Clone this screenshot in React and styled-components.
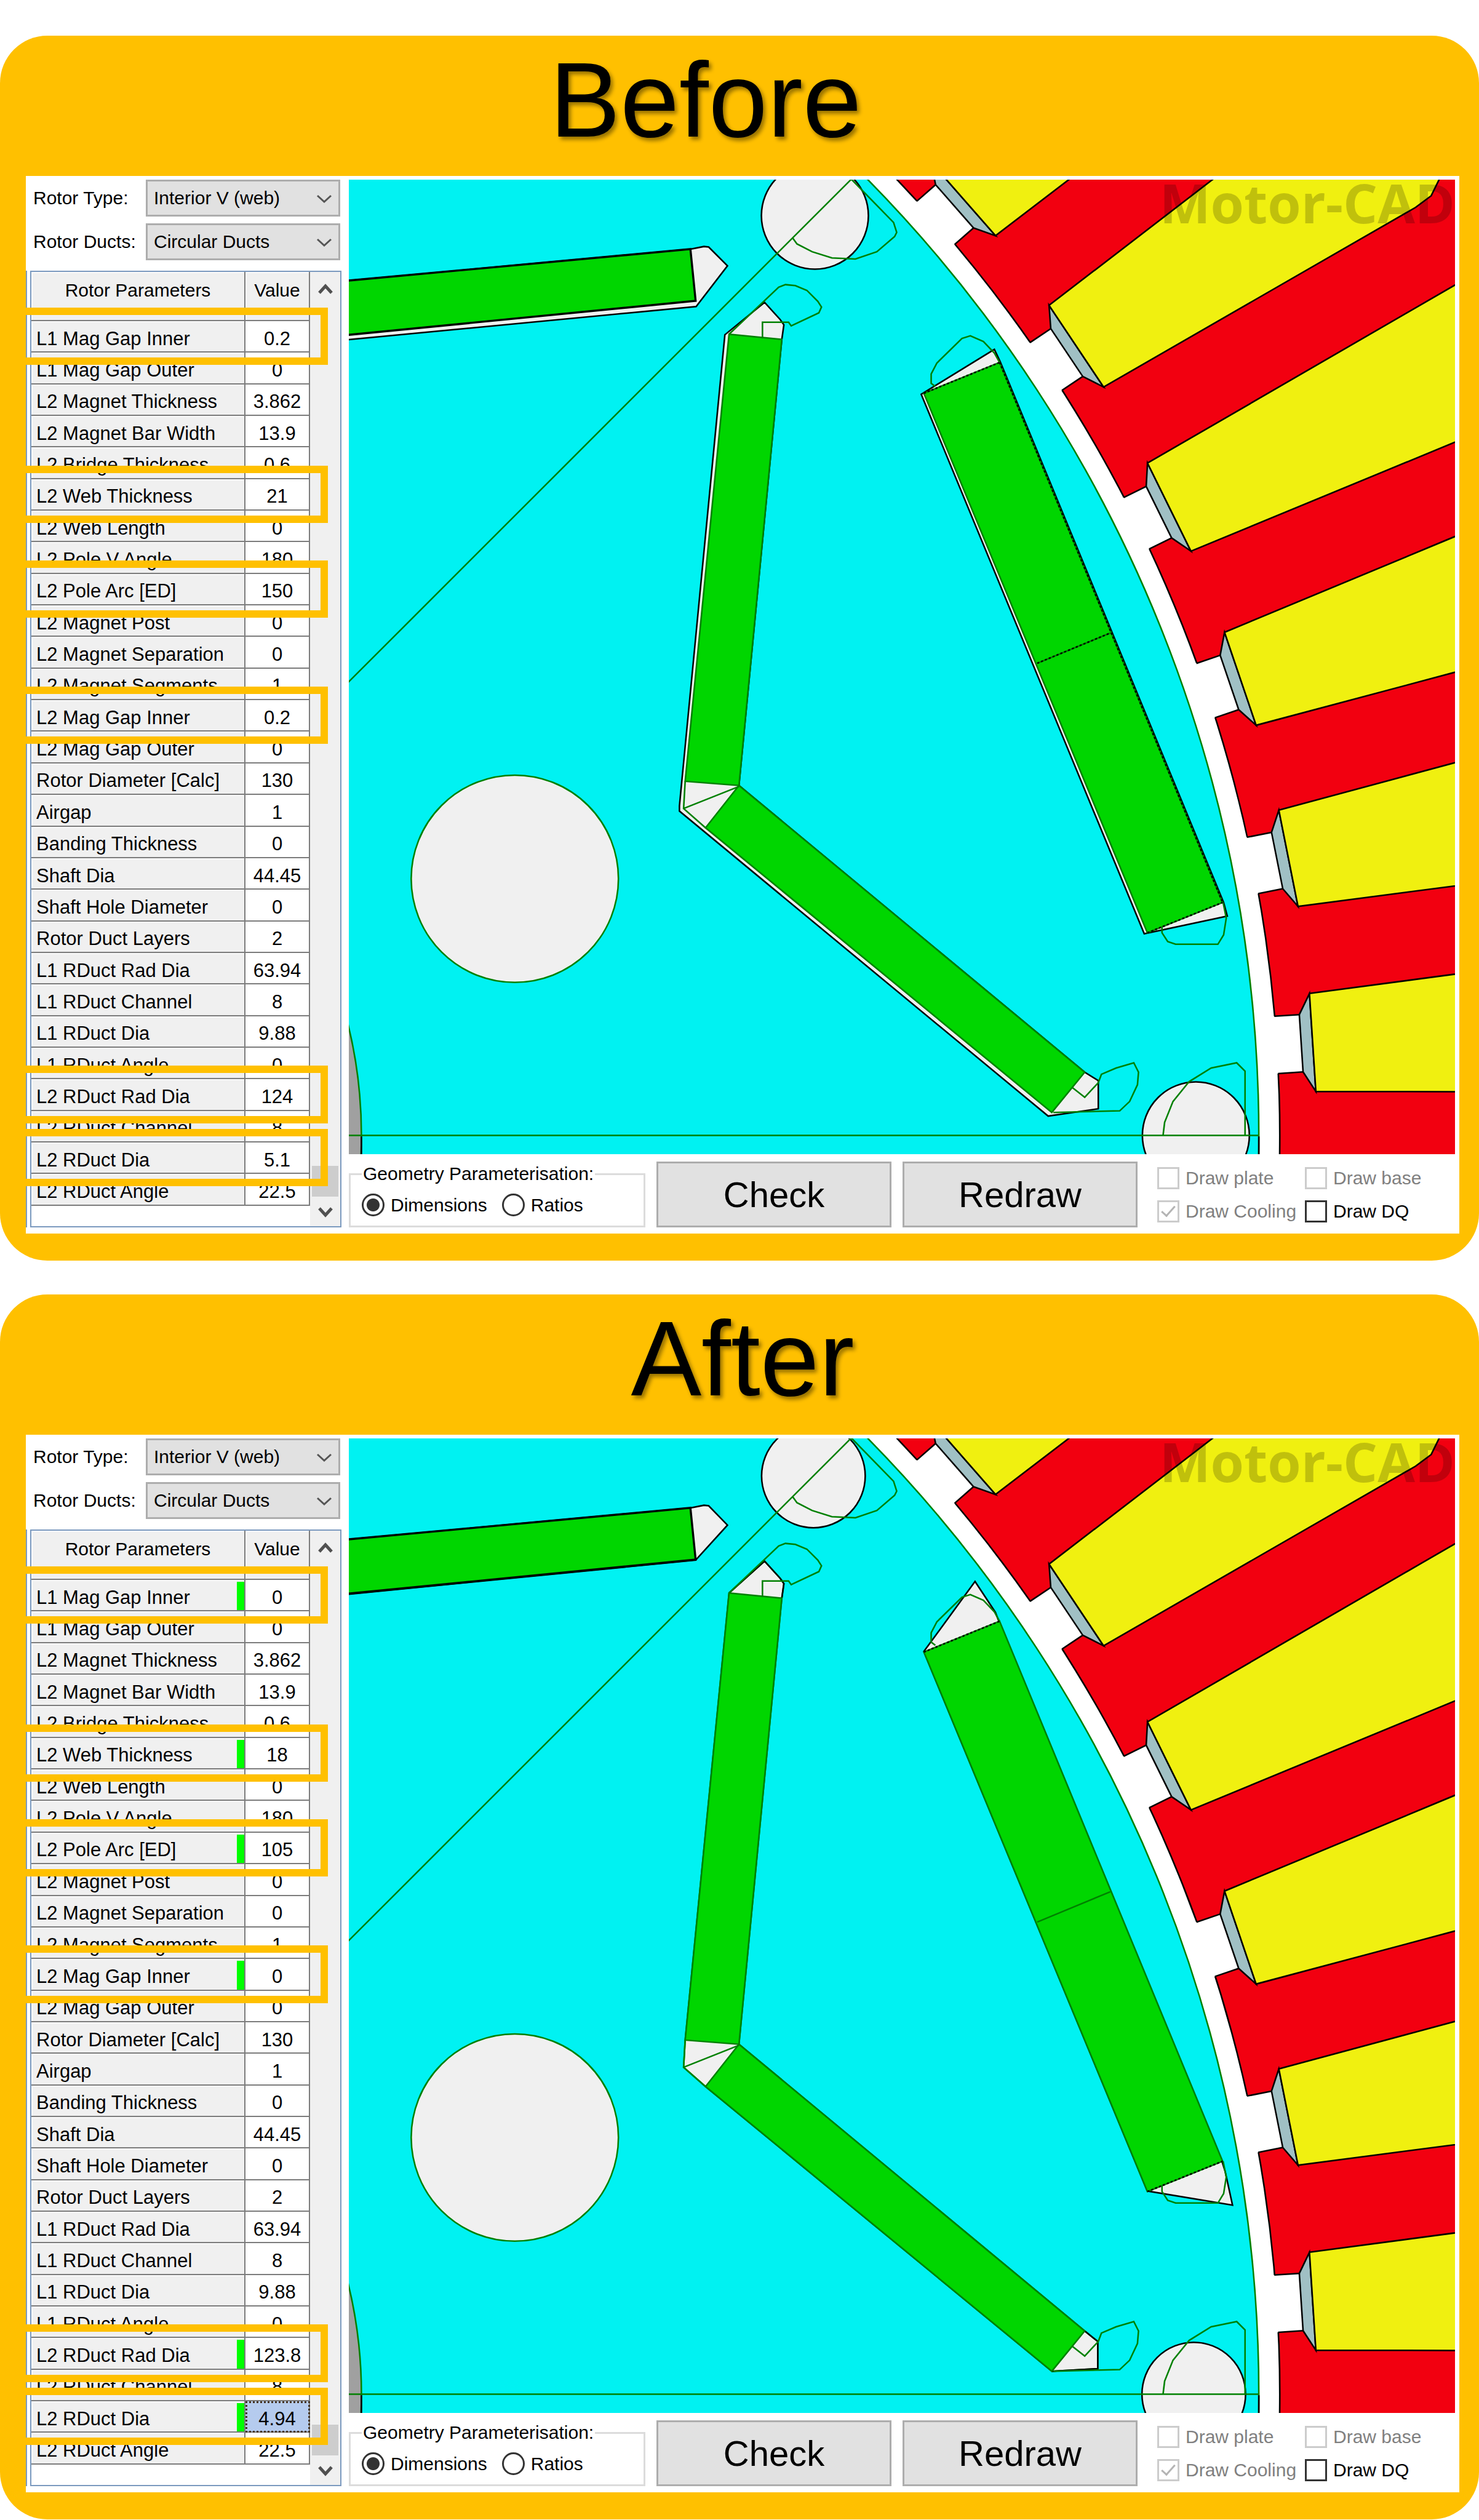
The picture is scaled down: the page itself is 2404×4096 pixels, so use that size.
import React from "react";
import styled, { createGlobalStyle, css } from "styled-components";

const AMBER = "#ffc000";
const FRAME_BLUE = "#7b9abf";
const GRID_GREY = "#7c7c7c";

const GlobalStyle = createGlobalStyle`
  *, *::before, *::after { box-sizing: border-box; }
  body {
    margin: 0;
    background: #fff;
    color: #000;
    font-family: "Liberation Sans", Arial, sans-serif;
    font-size: 30px;
    line-height: 36px;
  }
  button, select, input { font: inherit; color: inherit; margin: 0; }
`;

const Page = styled.main`
  display: flex;
  flex-direction: column;
  gap: 55px;
  padding-top: 58px;
`;

const Card = styled.section`
  background: ${AMBER};
  border-radius: 77px;
  padding: 0 32px 44px 42px;
`;

const Title = styled.h2`
  margin: 0;
  padding: 0 ${(p) => (p.$shift ? "120px" : "0")} 20px 0;
  font-size: 172px;
  line-height: 208px;
  font-weight: 400;
  text-align: center;
  text-shadow: 4px 5px 6px rgba(0, 0, 0, 0.4);
`;

const Panel = styled.div`
  display: flex;
  align-items: stretch;
  background: #fff;
  padding: 6px 7px 10px 0;
`;

const Sidebar = styled.div`
  flex: 0 0 525px;
  display: flex;
  flex-direction: column;
  gap: 17px;
  padding-right: 12px;
`;

const Form = styled.div`
  display: grid;
  grid-template-columns: 183px 1fr;
  row-gap: 11px;
  align-items: center;
  padding: 0 2px 0 12px;
`;

const SelectBox = styled.div`
  position: relative;
  height: 60px;
`;

const Select = styled.select`
  appearance: none;
  width: 100%;
  height: 100%;
  padding: 0 50px 0 10px;
  background: #e1e1e1;
  border: 3px solid #adadad;
  border-radius: 0;
`;

const SelectArrow = styled.svg`
  position: absolute;
  right: 13px;
  top: 23px;
  width: 26px;
  height: 16px;
  pointer-events: none;
`;

const GridOuter = styled.div`
  flex: 1;
  display: flex;
  border-left: 2px solid ${FRAME_BLUE};
  padding-left: 5px;
`;

const GridFrame = styled.div`
  flex: 1;
  display: flex;
  align-items: flex-start;
  border: 2px solid ${FRAME_BLUE};
`;

const Table = styled.table`
  table-layout: fixed;
  width: 453px;
  height: 1518px;
  border-collapse: separate;
  border-spacing: 0;
  font-size: 31px;
`;

const cell = css`
  padding: 8px 0 0;
  border-right: 2px solid ${GRID_GREY};
  border-bottom: 2px solid ${GRID_GREY};
  font-weight: 400;
`;

const HeadCell = styled.th`
  ${cell}
  width: ${(p) => p.$width};
  height: 80px;
  padding-top: 12px;
  background: #f0f0f0;
  box-shadow: inset 2px 2px 0 #fafafa;
  font-size: 30px;
  vertical-align: top;
`;

const NameCell = styled.th`
  ${cell}
  position: relative;
  padding-left: 8px;
  background: #f0f0f0;
  box-shadow: inset 2px 2px 0 #f9f9f9;
  text-align: left;
  white-space: nowrap;
`;

const ValueCell = styled.td`
  ${cell}
  background: ${(p) => (p.$selected ? "#b5cbee" : "#fff")};
  outline: ${(p) => (p.$selected ? "3px dotted #443322" : "none")};
  outline-offset: -3px;
  text-align: center;
`;

const Highlight = styled.span`
  position: absolute;
  z-index: 2;
  left: -21px;
  top: -22px;
  bottom: -22px;
  width: 503px;
  border: 12px solid ${AMBER};
  pointer-events: none;
`;

const ChangedMark = styled.span`
  position: absolute;
  right: 0;
  top: 3px;
  bottom: 0;
  width: 12px;
  background: #00ff00;
`;

const ScrollTrack = styled.div`
  flex: 1;
  align-self: stretch;
  display: flex;
  flex-direction: column;
  align-items: center;
  padding: 19px 3px 14px;
  background: #f0f0f0;
`;

const ScrollThumb = styled.div`
  width: 100%;
  height: 50px;
  margin: auto 0 16px;
  background: #cdcdcd;
`;

const ScrollArrow = styled.svg`
  width: 24px;
  height: 18px;
`;

const Workspace = styled.div`
  flex: 1;
  min-width: 0;
`;

const Canvas = styled.div`
  position: relative;
`;

const Drawing = styled.svg`
  display: block;
  width: 100%;
`;

const Watermark = styled.span`
  position: absolute;
  top: 0;
  right: 0;
  font-family: "Open Sans", "Noto Sans", sans-serif;
  font-size: 88px;
  line-height: 74px;
  font-weight: 700;
  color: rgba(0, 0, 0, 0.2);
`;

const BottomBar = styled.div`
  display: flex;
  align-items: flex-end;
  gap: 18px;
  padding-top: 12px;
`;

const Group = styled.fieldset`
  display: flex;
  align-items: center;
  gap: 24px;
  width: 482px;
  height: 104px;
  margin: 0;
  padding: 0 18px;
  border: 3px solid #dcdcdc;
`;

const Legend = styled.legend`
  padding: 0 2px;
  line-height: 34px;
`;

const Choice = styled.label`
  display: flex;
  align-items: center;
  gap: 10px;
  white-space: nowrap;
  color: ${(p) => (p.$dim ? "#808080" : "#000")};
`;

const Radio = styled.input`
  appearance: none;
  flex: none;
  width: 37px;
  height: 37px;
  border: 3px solid #333;
  border-radius: 50%;
  background: ${(p) =>
    p.defaultChecked
      ? "radial-gradient(circle, #333 0 10px, #fff 11px)"
      : "#fff"};
`;

const PushButton = styled.button`
  width: 382px;
  height: 107px;
  padding: 0;
  background: #e1e1e1;
  border: 3px solid #adadad;
  border-radius: 0;
  font-size: 58px;
`;

const Options = styled.div`
  display: grid;
  grid-template-columns: 240px auto;
  gap: 18px 0;
  margin: 0 0 8px 14px;
`;

const Tick = styled.input`
  appearance: none;
  flex: none;
  display: grid;
  place-items: center;
  width: 36px;
  height: 36px;
  border: 3px solid ${(p) => (p.disabled ? "#cccccc" : "#333")};
  background: #fff;

  &:checked::before {
    content: "";
    width: 12px;
    height: 22px;
    margin-top: -6px;
    border: solid #b4b4b4;
    border-width: 0 3px 3px 0;
    transform: rotate(42deg);
  }
`;

/* ---------- cross-section drawing ---------- */

const CX = -200.7;
const CY = 2174;
const MM = 40.17;
const GREEN = "#008000";
const MAGNET = "#00d600";
const AIR = "#f0f0f0";

const polar = (angle, u, v) => {
  const t = (angle * Math.PI) / 180;
  const x = CX + u * Math.cos(t) - v * Math.sin(t);
  const y = CY - u * Math.sin(t) - v * Math.cos(t);
  return `${x.toFixed(1)},${y.toFixed(1)}`;
};
const outline = (angle, pts) => pts.map(([u, v]) => polar(angle, u, v)).join(" ");

const SLOT_ANGLES = [3.75, 11.25, 18.75, 26.25, 33.75, 41.25, 48.75];
const WINDING = [
  [2720, 94], [3408, 140], [3445, 138], [3476, 120], [3500, 84],
  [3500, -84], [3476, -120], [3445, -138], [3408, -140], [2720, -94],
];
const WEDGE = [[2698, 55], [2720, 94], [2720, -94], [2698, -55]];

function Slot({ angle }) {
  return (
    <g>
      <polygon points={outline(angle, [[2630, 55], [2698, 55], [2698, -55], [2630, -55]])} fill="#fff" stroke="none" />
      <polyline points={outline(angle, [[2650, 55], [2698, 55]])} fill="none" />
      <polyline points={outline(angle, [[2650, -55], [2698, -55]])} fill="none" />
      <polygon points={outline(angle, WEDGE)} fill="#a0c0c4" />
      <polygon points={outline(angle, WINDING)} fill="#f0f010" />
    </g>
  );
}

const CAVITIES = {
  before: {
    outer: "1764,755 1904,669 1915,692 2343,1728 2350,1754 2191,1788",
    inner:
      "1388,641 1464,579 1494,612 1501,622 1497,650 1415,1504 2077,2053 2103,2069 2103,2123 2007,2137 1301,1553 1301,1543",
    left: "660,538 1322,477 1348,472 1357,473 1393,509 1333,587 660,651",
    ductRadius: 62 * MM,
    ductSize: 2.55 * MM,
  },
  after: {
    outer: "1769,752 1867,618 1906,677 1913,695 2340,1729 2346,1748 2360,1812 2197,1785",
    inner:
      "1396,640 1464,579 1494,612 1501,622 1497,650 1415,1504 2077,2053 2102,2073 2102,2125 2014,2130 1351,1585 1309,1548 1312,1496",
    left: "660,538 1322,477 1348,472 1357,473 1393,510 1332,577 660,643",
    ductRadius: 61.9 * MM,
    ductSize: 2.47 * MM,
  },
};

function CrossSection({ variant }) {
  const c = CAVITIES[variant];
  const diag = Math.SQRT1_2 * c.ductRadius;
  const before = variant === "before";
  return (
    <Drawing viewBox="668 344 2118 1866" role="img" aria-label="Motor cross-section">
      <g stroke="#000" strokeWidth="3">
        <rect x="668" y="344" width="2120" height="1868" fill="#f20010" stroke="none" />
        <circle cx={CX} cy={CY} r={66 * MM} fill="#fff" />
        {SLOT_ANGLES.map((a) => (
          <Slot key={a} angle={a} />
        ))}
        <circle cx={CX} cy={CY} r={65 * MM} fill="#00f2f2" stroke={GREEN} />
        <circle cx={CX} cy={CY} r={22.225 * MM} fill="#a0a0a0" stroke={GREEN} />
        <path d="M2410.4 2176V2212M692 2176V2212" />

        <circle cx="985.8" cy="1682.6" r="198.4" fill={AIR} stroke={GREEN} />
        <circle cx={CX + c.ductRadius} cy={CY} r={c.ductSize} fill={AIR} />
        <circle cx={CX + diag} cy={CY - diag} r={c.ductSize} fill={AIR} />

        <polygon points={c.left} fill={AIR} />
        <polygon points="660,538 1322,477 1332,576 660,642" fill={MAGNET} strokeWidth="4" />
        <polygon points={c.outer} fill={AIR} />
        <polygon points={c.inner} fill={AIR} stroke={before ? "#000" : GREEN} />
        {!before && (
          <path d="M1396 640L1464 579L1494 612L1501 622L1497 650M2077 2053L2102 2073V2125L2014 2130" fill="none" />
        )}
      </g>

      <g stroke={GREEN} strokeWidth="3" fill="none">
        <polygon points="1396,640 1497,650 1415,1504 1312,1496" fill={MAGNET} />
        <polygon points="1415,1504 2077,2053 2014,2130 1351,1585" fill={MAGNET} />
        <polygon points="1769,753 1914,694 2341,1728 2197,1786" fill={MAGNET} />
        <path d="M1986 1270L2126 1212" />
        <path d="M1312 1496L1309 1548L1351 1585M1415 1506L1309 1548" />
        <path d="M1396 640L1491 550L1504 545L1523 547L1545 556L1566 577L1573 588L1568 599L1515 624L1510 617H1460V648" />
        <path d="M2053 2082L2077 2101L2103 2073L2109 2057L2137 2045L2171 2035L2180 2053L2178 2077L2163 2109L2144 2127L2017 2130" />
        <path d="M1791 740L1783 734V716L1794 695L1842 648L1858 643L1883 654L1904 676L1914 694" />
        <path d="M2225 1774V1786L2236 1803L2251 1808H2332L2343 1790L2348 1758L2342 1728" />
        <path d="M1631 344L1711 426L1717 445L1713 453L1679 482L1638 496L1593 494L1555 482L1526 467L1518 456" />
        <path d="M2227 2174L2230 2149L2246 2109L2277 2071L2319 2045L2368 2035L2384 2051V2174" />
        <path d="M660 1313.3L1631 342.3M660 2174H2411" />
      </g>
      <g stroke="#000" strokeWidth="3" strokeDasharray="4 4" fill="none">
        <path d="M1769 753L1914 694M2197 1786L2341 1728" />
        {before && <path d="M1914 694L2341 1728M1986 1270L2126 1212" />}
      </g>
    </Drawing>
  );
}

/* ---------- data ---------- */

const PARAMETERS = [
  ["L1 Mag Gap Inner", "0.2", "0"],
  ["L1 Mag Gap Outer", "0"],
  ["L2 Magnet Thickness", "3.862"],
  ["L2 Magnet Bar Width", "13.9"],
  ["L2 Bridge Thickness", "0.6"],
  ["L2 Web Thickness", "21", "18"],
  ["L2 Web Length", "0"],
  ["L2 Pole V Angle", "180"],
  ["L2 Pole Arc [ED]", "150", "105"],
  ["L2 Magnet Post", "0"],
  ["L2 Magnet Separation", "0"],
  ["L2 Magnet Segments", "1"],
  ["L2 Mag Gap Inner", "0.2", "0"],
  ["L2 Mag Gap Outer", "0"],
  ["Rotor Diameter [Calc]", "130"],
  ["Airgap", "1"],
  ["Banding Thickness", "0"],
  ["Shaft Dia", "44.45"],
  ["Shaft Hole Diameter", "0"],
  ["Rotor Duct Layers", "2"],
  ["L1 RDuct Rad Dia", "63.94"],
  ["L1 RDuct Channel", "8"],
  ["L1 RDuct Dia", "9.88"],
  ["L1 RDuct Angle", "0"],
  ["L2 RDuct Rad Dia", "124", "123.8"],
  ["L2 RDuct Channel", "8"],
  ["L2 RDuct Dia", "5.1", "4.94"],
  ["L2 RDuct Angle", "22.5"],
];

function Dropdown({ id, label, value }) {
  return (
    <>
      <label htmlFor={id}>{label}</label>
      <SelectBox>
        <Select id={id} defaultValue={value}>
          <option>{value}</option>
        </Select>
        <SelectArrow viewBox="0 0 26 16" aria-hidden="true">
          <path d="M2 3L13 13L24 3" fill="none" stroke="#555" strokeWidth="3" />
        </SelectArrow>
      </SelectBox>
    </>
  );
}

function ParameterGrid({ variant }) {
  const after = variant === "after";
  return (
    <GridOuter>
      <GridFrame>
        <Table>
          <thead>
            <tr>
              <HeadCell scope="col" $width="348px">Rotor Parameters</HeadCell>
              <HeadCell scope="col" $width="105px">Value</HeadCell>
            </tr>
          </thead>
          <tbody>
            {PARAMETERS.map(([name, value, changed]) => (
              <tr key={name}>
                <NameCell scope="row">
                  {name}
                  {changed && after && <ChangedMark />}
                  {changed && <Highlight />}
                </NameCell>
                <ValueCell $selected={after && name === "L2 RDuct Dia"}>
                  {after && changed ? changed : value}
                </ValueCell>
              </tr>
            ))}
          </tbody>
        </Table>
        <ScrollTrack>
          <ScrollArrow viewBox="0 0 24 18" aria-hidden="true">
            <path d="M2 15L12 4L22 15" fill="none" stroke="#505050" strokeWidth="5" />
          </ScrollArrow>
          <ScrollThumb />
          <ScrollArrow viewBox="0 0 24 18" aria-hidden="true">
            <path d="M2 3L12 14L22 3" fill="none" stroke="#505050" strokeWidth="5" />
          </ScrollArrow>
        </ScrollTrack>
      </GridFrame>
    </GridOuter>
  );
}

function GeometryCard({ title, variant }) {
  return (
    <Card>
      <Title $shift={variant === "before"}>{title}</Title>
      <Panel>
        <Sidebar>
          <Form>
            <Dropdown id={`${variant}-type`} label="Rotor Type:" value="Interior V (web)" />
            <Dropdown id={`${variant}-ducts`} label="Rotor Ducts:" value="Circular Ducts" />
          </Form>
          <ParameterGrid variant={variant} />
        </Sidebar>
        <Workspace>
          <Canvas>
            <CrossSection variant={variant} />
            <Watermark>Motor-CAD</Watermark>
          </Canvas>
          <BottomBar>
            <Group>
              <Legend>Geometry Parameterisation:</Legend>
              <Choice>
                <Radio type="radio" name={`${variant}-geometry`} defaultChecked />
                Dimensions
              </Choice>
              <Choice>
                <Radio type="radio" name={`${variant}-geometry`} />
                Ratios
              </Choice>
            </Group>
            <PushButton type="button">Check</PushButton>
            <PushButton type="button">Redraw</PushButton>
            <Options>
              <Choice $dim><Tick type="checkbox" disabled />Draw plate</Choice>
              <Choice $dim><Tick type="checkbox" disabled />Draw base</Choice>
              <Choice $dim><Tick type="checkbox" disabled defaultChecked />Draw Cooling</Choice>
              <Choice><Tick type="checkbox" />Draw DQ</Choice>
            </Options>
          </BottomBar>
        </Workspace>
      </Panel>
    </Card>
  );
}

export default function App() {
  return (
    <>
      <GlobalStyle />
      <Page>
        <GeometryCard title="Before" variant="before" />
        <GeometryCard title="After" variant="after" />
      </Page>
    </>
  );
}
